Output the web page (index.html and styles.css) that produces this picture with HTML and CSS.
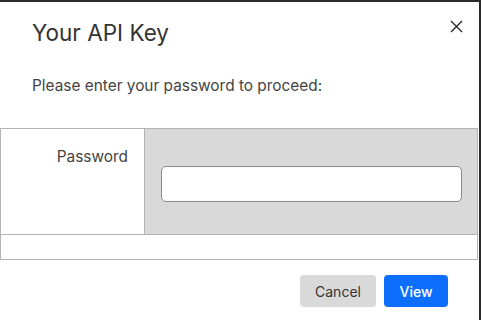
FILE: index.html
```html
<!DOCTYPE html>
<html lang="en">

<head>
    <meta charset="UTF-8">
    <meta name="viewport" content="width=device-width, initial-scale=1.0">
    <title>Your API Key</title>
    <link rel="stylesheet" href="styles.css">
</head>

<body>
    <div class="modal">
        <div class="modal-header">
            <h1>Your API Key</h1>
            <button class="close-btn" aria-label="Close">
                <svg width="13" height="13" viewBox="0 0 13 13">
                    <path d="M1 1 L12 12 M12 1 L1 12" stroke="#222" stroke-width="1.3" fill="none"/>
                </svg>
            </button>
        </div>
        <p class="intro">Please enter your password to proceed:</p>
        <table class="form-table">
            <tr>
                <td class="label-cell"><label for="password">Password</label></td>
                <td class="input-cell"><input type="password" id="password"></td>
            </tr>
            <tr>
                <td colspan="2" class="empty-row"></td>
            </tr>
        </table>
        <div class="modal-footer">
            <button class="btn btn-secondary">Cancel</button>
            <button class="btn btn-primary">View</button>
        </div>
    </div>
</body>

</html>
```

FILE: styles.css
```css
:root {
    --primary: #0d6efd;
    --gray: #d9d9d9;
    --dark: #333333;
    --text: #444444;
    --border: #b3b3b3;
}

* {
    margin: 0;
    padding: 0;
    box-sizing: border-box;
}

body {
    font-family: Inter, "Noto Sans", sans-serif;
    background-color: #2b2b2b;
    color: var(--text);
    padding-top: 2px;
    overflow: hidden;
}

.modal {
    width: 479px;
    height: 340px;
    background-color: #ffffff;
}

.modal-header {
    display: flex;
    justify-content: space-between;
    align-items: flex-start;
    padding: 17px 14px 0 32px;
}

.modal-header h1 {
    font-size: 22.5px;
    font-weight: 400;
    color: var(--dark);
    line-height: 28px;
}

.close-btn {
    background: none;
    border: none;
    padding: 2px;
    margin-top: -1px;
    cursor: pointer;
    line-height: 0;
}

.intro {
    font-size: 15.4px;
    line-height: 20px;
    padding: 29px 32px 0 32px;
    color: var(--text);
}

.form-table {
    margin-top: 32px;
    width: 478px;
    border-collapse: collapse;
}

.form-table td {
    border: 1px solid var(--border);
}

.label-cell {
    width: 144px;
    vertical-align: top;
    text-align: right;
    padding: 18px 16px 0 0;
    font-size: 15.4px;
    color: var(--text);
}

.input-cell {
    background-color: var(--gray);
    padding: 37px 15px 32px 16px;
}

.input-cell input {
    display: block;
    width: 100%;
    height: 36px;
    border: 1px solid #8a8a8a;
    border-radius: 5px;
    background: #ffffff;
    font-size: 15px;
    padding: 0 10px;
}

.empty-row {
    height: 25px;
}

.modal-footer {
    display: flex;
    justify-content: flex-end;
    gap: 8px;
    padding: 15px 31px 0 0;
}

.btn {
    height: 32px;
    border: none;
    border-radius: 4px;
    font-family: Inter, "Noto Sans", sans-serif;
    font-size: 14px;
    cursor: pointer;
}

.btn-secondary {
    width: 76px;
    background-color: var(--gray);
    color: var(--dark);
}

.btn-primary {
    width: 64px;
    background-color: var(--primary);
    color: #ffffff;
    font-weight: 500;
}
```
